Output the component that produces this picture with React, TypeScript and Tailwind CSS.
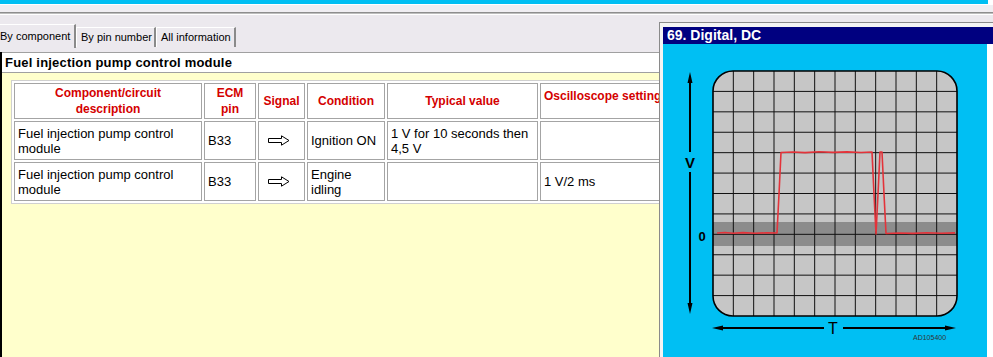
import type { ReactNode } from "react";

// ─── Scope drawing ──────────────────────────────────────────────────────────

const SCREEN = { x: 50, y: 27, w: 244, h: 245 };

function Scope() {
  const cols = Array.from({ length: 11 }, (_, i) => SCREEN.x + (SCREEN.w / 12) * (i + 1));
  const rows = Array.from({ length: 11 }, (_, i) => SCREEN.y + (SCREEN.h / 12) * (i + 1));
  const trace =
    "M54 189 L62 188.5 L70 189.2 L80 188.6 L92 189.3 L104 188.7 L114 189 L116 150 L118 108.5 " +
    "L130 108 L142 108.6 L156 107.8 L170 108.4 L184 107.9 L198 108.5 L209 108 L211 150 L213 190 " +
    "L215 150 L217 108 L219 108 L221 150 L223 189.5 L236 189 L250 189.4 L264 188.8 L278 189.3 L292 188.9";

  return (
    <svg width="324" height="313" viewBox="0 0 324 313">
      <defs>
        <clipPath id="screen">
          <rect x={SCREEN.x} y={SCREEN.y} width={SCREEN.w} height={SCREEN.h} rx="20" />
        </clipPath>
      </defs>
      <g clipPath="url(#screen)">
        <rect x={SCREEN.x} y={SCREEN.y} width={SCREEN.w} height={SCREEN.h} fill="#c6c6c6" />
        <rect x={SCREEN.x} y="178" width={SCREEN.w} height="24" fill="#8c8c8c" />
        {cols.map((x) => (
          <line key={`c${x}`} x1={x} y1={SCREEN.y} x2={x} y2={SCREEN.y + SCREEN.h} stroke="#111" strokeWidth="1" />
        ))}
        {rows.map((y) => (
          <line key={`r${y}`} x1={SCREEN.x} y1={y} x2={SCREEN.x + SCREEN.w} y2={y} stroke="#111" strokeWidth="1" />
        ))}
        <path d={trace} fill="none" stroke="#e3333a" strokeWidth="1.6" strokeLinejoin="round" />
      </g>
      <rect x={SCREEN.x} y={SCREEN.y} width={SCREEN.w} height={SCREEN.h} rx="20" fill="none" stroke="#000" strokeWidth="1.6" />

      {/* V axis */}
      <line x1="27" y1="34" x2="27" y2="108" stroke="#000" strokeWidth="2" />
      <line x1="27" y1="128" x2="27" y2="264" stroke="#000" strokeWidth="2" />
      <polygon points="27,28 24.5,39 29.5,39" fill="#000" />
      <polygon points="27,270 24.5,259 29.5,259" fill="#000" />
      <text x="27" y="124" textAnchor="middle" fontSize="15" fontWeight="bold" fontFamily="Liberation Sans, Arial, sans-serif">
        V
      </text>
      <text x="39" y="197" textAnchor="middle" fontSize="13" fontWeight="bold" fontFamily="Liberation Sans, Arial, sans-serif">
        0
      </text>

      {/* T axis */}
      <line x1="55" y1="284" x2="161" y2="284" stroke="#000" strokeWidth="2" />
      <line x1="180" y1="284" x2="286" y2="284" stroke="#000" strokeWidth="2" />
      <polygon points="49,284 60,281.5 60,286.5" fill="#000" />
      <polygon points="293,284 282,281.5 282,286.5" fill="#000" />
      <text x="170" y="290" textAnchor="middle" fontSize="16" fontFamily="Liberation Sans, Arial, sans-serif">
        T
      </text>
      <text x="250" y="296" fontSize="7" fill="#333" fontFamily="Liberation Sans, Arial, sans-serif">
        AD105400
      </text>
    </svg>
  );
}

// ─── Table bits ─────────────────────────────────────────────────────────────

function SignalArrow() {
  return (
    <svg width="22" height="11" viewBox="0 0 22 11">
      <path d="M0.5 3.5 H13.5 V0.8 L21 5.5 L13.5 10.2 V7.5 H0.5 Z" fill="#fff" stroke="#000" strokeWidth="1" />
    </svg>
  );
}

function Th({ children, top }: { children: ReactNode; top?: boolean }) {
  return (
    <div
      className={`flex border border-[#a4a4a4] bg-white px-[3px] text-[12px] leading-[16px] font-bold text-[#d40000] ${
        top ? "items-start pt-[4px] whitespace-nowrap" : "items-center justify-center text-center"
      }`}
    >
      {children}
    </div>
  );
}

function Td({ children, center }: { children?: ReactNode; center?: boolean }) {
  return (
    <div
      className={`flex items-center border border-[#a4a4a4] bg-white px-[3px] text-[13px] leading-[15px] text-black ${
        center ? "justify-center pr-[8px]" : ""
      }`}
    >
      {children}
    </div>
  );
}

// ─── Tabs ───────────────────────────────────────────────────────────────────

function Tab({ label, active }: { label: string; active?: boolean }) {
  return active ? (
    <div className="mt-[9px] flex h-[24px] w-[78px] -ml-[2px] items-center border-r-2 border-r-[#8a8a8a] border-t border-t-white pl-[2px] text-[11px] text-black">
      {label}
    </div>
  ) : (
    <div className="mt-[12px] flex h-[20px] w-[80px] items-center border-l border-t border-l-white border-t-white border-r-2 border-r-[#8a8a8a] pl-[4px] text-[11px] text-black">
      {label}
    </div>
  );
}

// ─── App ────────────────────────────────────────────────────────────────────

export default function App() {
  return (
    <div className="relative flex h-[357px] w-[993px] flex-col overflow-hidden bg-[#ece9ee] font-['Liberation_Sans',Arial,sans-serif]">
      {/* Top strip */}
      <div className="flex h-[4px] shrink-0">
        <div className="flex-1 bg-[#00bff3]" />
        <div className="w-[5px] bg-white" />
      </div>
      <div className="h-[8px] shrink-0 border-t border-white bg-[#f0eef2]" />
      <div className="h-[1px] shrink-0 bg-[#8e8e8e]" />
      <div className="h-[1px] shrink-0 bg-[#bdbdbd]" />

      {/* Tab row */}
      <div className="flex h-[38px] shrink-0 items-start border-t border-white bg-[#ece9ee]">
        <Tab label="By component" active />
        <Tab label="By pin number" />
        <Tab label="All information" />
      </div>

      {/* Content */}
      <div className="flex flex-1 flex-col border-l-2 border-black">
        <div className="flex h-[21px] shrink-0 items-center border-y border-[#a0a0a0] bg-white pl-[3px] text-[13px] font-bold tracking-[0.2px] text-black">
          Fuel injection pump control module
        </div>
        <div className="flex-1 bg-[#ffffcc] pt-[7px] pl-[9px]">
          <div className="grid w-fit grid-cols-[188px_52px_47px_78px_151px_260px] grid-rows-[36px_39px_39px] gap-[2px] border border-[#d0d0d0] bg-white p-[2px]">
            <Th>
              Component/circuit
              <br />
              description
            </Th>
            <Th>
              ECM
              <br />
              pin
            </Th>
            <Th>Signal</Th>
            <Th>Condition</Th>
            <Th>Typical value</Th>
            <Th top>Oscilloscope settings</Th>

            <Td>
              Fuel injection pump control
              <br />
              module
            </Td>
            <Td>B33</Td>
            <Td center>
              <SignalArrow />
            </Td>
            <Td>Ignition ON</Td>
            <Td>
              1 V for 10 seconds then
              <br />
              4,5 V
            </Td>
            <Td />

            <Td>
              Fuel injection pump control
              <br />
              module
            </Td>
            <Td>B33</Td>
            <Td center>
              <SignalArrow />
            </Td>
            <Td>
              Engine
              <br />
              idling
            </Td>
            <Td />
            <Td>1 V/2 ms</Td>
          </div>
        </div>
      </div>

      {/* Oscillogram window */}
      <div className="absolute top-[22px] bottom-0 left-[659px] right-0 border-l border-t border-[#8a8a8a] bg-[#f4f4f4] pl-[3px] pt-[4px]">
        <div className="flex h-full flex-col bg-white">
          <div className="flex h-[17px] shrink-0 items-center bg-[#000080] pl-[4px] text-[14px] font-bold text-white">
            69. Digital, DC
          </div>
          <div className="w-[324px] flex-1 bg-[#00bff3]">
            <Scope />
          </div>
        </div>
      </div>
    </div>
  );
}
